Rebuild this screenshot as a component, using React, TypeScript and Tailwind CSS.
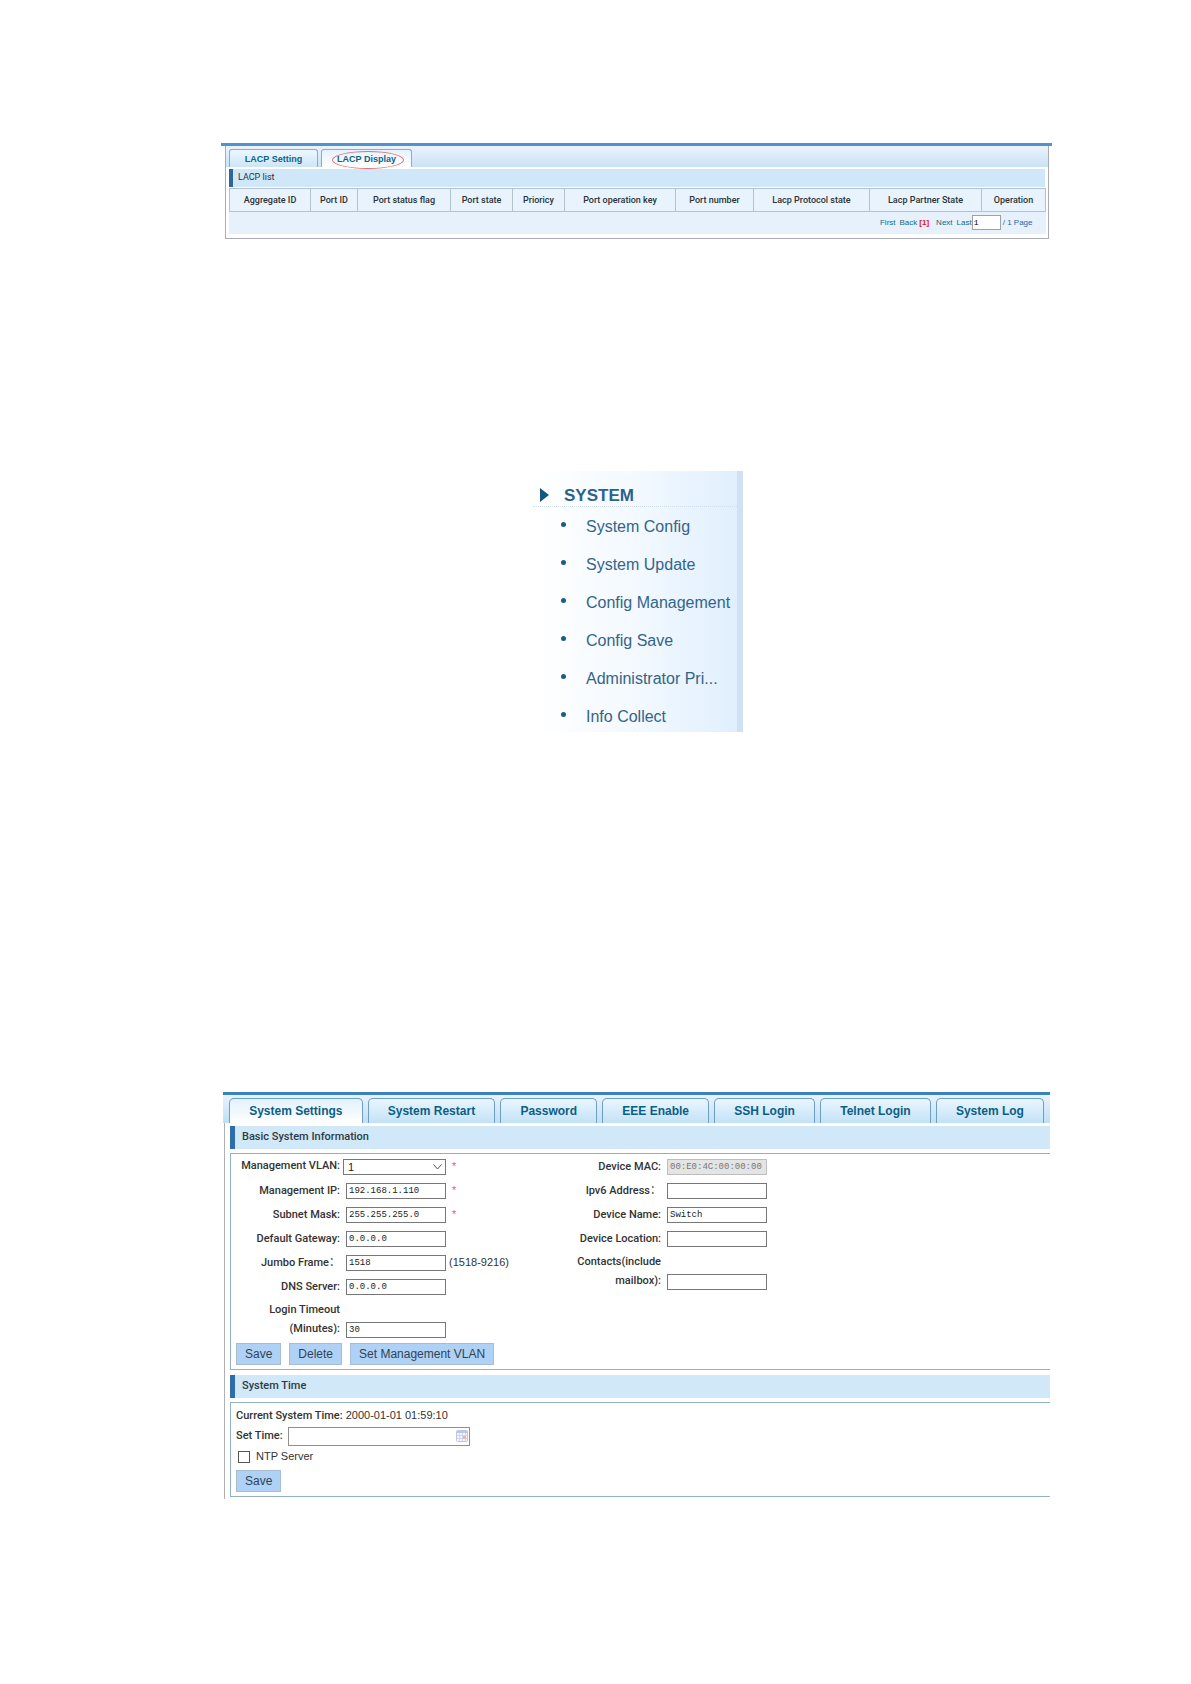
import { ReactNode } from "react";

const columns: [string, string][] = [
  ["Aggregate ID", "w-[81px]"],
  ["Port ID", "w-[47px]"],
  ["Port status flag", "w-[93px]"],
  ["Port state", "w-[62px]"],
  ["Prioricy", "w-[52px]"],
  ["Port operation key", "w-[111px]"],
  ["Port number", "w-[78px]"],
  ["Lacp Protocol state", "w-[116px]"],
  ["Lacp Partner State", "w-[112px]"],
  ["Operation", "w-[64px]"],
];

const menuItems = [
  "System Config",
  "System Update",
  "Config Management",
  "Config Save",
  "Administrator Pri...",
  "Info Collect",
];

const systemTabs = [
  "System Settings",
  "System Restart",
  "Password",
  "EEE Enable",
  "SSH Login",
  "Telnet Login",
  "System Log",
];

function LacpPanel() {
  return (
    <section className="border-t-3 border-[#4d93cf]">
      <div className="ml-1 mr-[3px] border-x border-b border-[#a9adb3] border-t-0">
        <div
          role="tablist"
          className="flex h-[21px] items-end gap-[3px] bg-linear-to-b from-[#edf2fd] to-[#c8e3f5] pl-[3px]"
        >
          <button
            role="tab"
            aria-selected={false}
            className="h-[18px] w-[89px] rounded-t-[3px] border border-b-0 border-[#86aed0] bg-linear-to-b from-[#eef7fe] to-[#cbe6f8] text-[9px] font-bold leading-4 text-[#0b6489]"
          >
            LACP Setting
          </button>
          <button
            role="tab"
            aria-selected
            className="relative h-[18px] w-[91px] rounded-t-[3px] border border-b-0 border-[#86aed0] bg-linear-to-b from-[#e6f2fc] to-white text-[9px] font-bold leading-4 text-[#0b6489]"
          >
            LACP Display
            <span className="absolute left-[10px] top-px h-[18px] w-[72px] rounded-[50%] border border-[#e0707a]" />
          </button>
        </div>
        <div className="px-[3px] pb-1 pt-[2px]">
          <h2 className="h-[18px] border-l-4 border-[#2f6699] bg-[#cfe7f8] pl-[5px] font-['Roboto',sans-serif] text-[9px] leading-[17px] text-[#26323c]">
            LACP list
          </h2>
          <table className="mt-px w-full table-fixed border-collapse bg-[#e6f1fb] text-[#2b3238]">
            <thead>
              <tr className="h-[23px]">
                {columns.map(([name, width]) => (
                  <th
                    key={name}
                    className={`${width} whitespace-nowrap border border-[#b3c3cd] bg-[#e8f3fd] p-0 font-['Roboto',sans-serif] text-[9px] font-medium leading-3`}
                  >
                    {name}
                  </th>
                ))}
              </tr>
            </thead>
            <tbody>
              <tr className="h-[22px]">
                <td colSpan={10} className="p-0">
                  <div className="flex items-center justify-end pr-[13px] text-[8px] text-[#0d6c86]">
                    <a href="#first">First</a>
                    <a href="#back" className="ml-1">Back</a>
                    <span className="ml-[2px] font-bold text-[#e0122c]">[1]</span>
                    <a href="#next" className="ml-[7px]">Next</a>
                    <a href="#last" className="ml-1">Last</a>
                    <input
                      aria-label="Page number"
                      defaultValue="1"
                      className="h-[15px] w-[29px] border border-[#9aa3aa] bg-white px-px font-['Liberation_Mono',monospace] text-[8px] text-black"
                    />
                    <span className="ml-[2px] text-[#2a68ab]">/ 1 Page</span>
                  </div>
                </td>
              </tr>
            </tbody>
          </table>
        </div>
      </div>
    </section>
  );
}

function SystemMenu() {
  return (
    <nav className="ml-[312px] mt-[232px] w-[210px] border-r-6 border-[#d0e0f5] bg-linear-to-r from-white via-[#f3f9ff] to-[#e0effd] pb-[3px] text-[#33648a]">
      <div className="flex h-9 items-end border-b border-dotted border-[#cfdcea] pl-[7px]">
        <svg viewBox="0 0 9 14" className="mb-1 h-[14px] w-[9px]" aria-hidden="true">
          <path d="M0 0L9 7L0 14Z" fill="#15587f" />
        </svg>
        <span className="ml-[15px] text-[17px] font-bold leading-5 text-[#2a6389]">SYSTEM</span>
      </div>
      <ul className="flex flex-col gap-[14px] pt-2">
        {menuItems.map((item) => (
          <li key={item} className="flex h-6 items-center whitespace-nowrap pl-7">
            <span className="mb-1 size-[5px] rounded-full bg-[#1d5b82]" />
            <a href="#menu" className="ml-5 text-[16px] leading-5">{item}</a>
          </li>
        ))}
      </ul>
    </nav>
  );
}

function SectionTitle({ children }: { children: ReactNode }) {
  return (
    <h2 className="h-[23px] border-l-5 border-[#2f6cab] bg-[#d1e8f8] pl-[7px] font-['Roboto',sans-serif] text-[11px] font-medium leading-[22px] text-[#2f3a43]">
      {children}
    </h2>
  );
}

function Field({
  id,
  label,
  labelWidth,
  value = "",
  required,
  disabled,
  hint,
  wrap,
}: {
  id: string;
  label: string;
  labelWidth: string;
  value?: string;
  required?: boolean;
  disabled?: boolean;
  hint?: string;
  wrap?: boolean;
}) {
  return (
    <div className={wrap ? "-mt-[3px] flex items-end" : "flex h-4 items-center"}>
      <label
        htmlFor={id}
        className={`${labelWidth} ${wrap ? "leading-[19px]" : "whitespace-nowrap leading-4"} text-right font-['Roboto','Noto_Sans_CJK_SC',sans-serif] font-medium`}
      >
        {label}
      </label>
      <input
        id={id}
        defaultValue={value}
        disabled={disabled}
        className="ml-[6px] h-4 w-[100px] border border-[#777] bg-white px-[2px] font-['Liberation_Mono',monospace] text-[9px] text-[#222] disabled:border-[#bdbdbd] disabled:bg-[#e4e4e4] disabled:text-[#777]"
      />
      {required && <span className="ml-[6px] text-[#f0604d]">*</span>}
      {hint && <span className="ml-[3px]">{hint}</span>}
    </div>
  );
}

function ActionButton({ children }: { children: ReactNode }) {
  return (
    <button className="h-[22px] border border-[#a8bccf] bg-[#aed1f5] px-2 text-[12px] leading-5 text-[#2e4357]">
      {children}
    </button>
  );
}

function SystemPanel() {
  return (
    <section className="ml-[2px] mr-[2px] mt-[360px] border-t-3 border-[#3c82c0] text-[11px] text-[#333]">
      <div
        role="tablist"
        className="flex h-[28px] items-end gap-[5px] bg-linear-to-b from-[#e8f3fd] to-[#bfdff5] pl-[6px] pr-[6px]"
      >
        {systemTabs.map((tab, i) => (
          <button
            key={tab}
            role="tab"
            aria-selected={i === 0}
            className={`h-[25px] flex-auto whitespace-nowrap rounded-t-[5px] border border-b-0 border-[#6f9fc4] bg-linear-to-b text-[12px] font-bold leading-6 text-[#0b5f86] ${
              i === 0 ? "from-[#e3f1fc] to-white" : "from-[#eaf6fe] to-[#c3e2f7]"
            }`}
          >
            {tab}
          </button>
        ))}
      </div>
      <div className="ml-px border-l border-[#b0b0b0] pb-[2px] pl-[5px] pt-[3px]">
        <SectionTitle>Basic System Information</SectionTitle>
        <div className="mt-1 border-y border-l border-[#93b1c6] pb-1 pl-[5px] pt-[5px]">
          <div className="flex">
            <div className="flex w-[325px] flex-col gap-2">
              <div className="flex h-4 items-center">
                <label
                  htmlFor="vlan"
                  className="w-[104px] whitespace-nowrap text-right font-['Roboto',sans-serif] font-medium"
                >
                  Management VLAN:
                </label>
                <span className="relative ml-[3px] flex">
                  <select
                    id="vlan"
                    className="h-4 w-[103px] appearance-none border border-[#777] bg-white pl-1 text-[11px] leading-[14px] text-[#222]"
                  >
                    <option>1</option>
                  </select>
                  <svg
                    viewBox="0 0 9 6"
                    className="pointer-events-none absolute right-1 top-[5px] h-[6px] w-[9px]"
                    aria-hidden="true"
                  >
                    <path d="M0.5 0.5L4.5 5L8.5 0.5" fill="none" stroke="#555" />
                  </svg>
                </span>
                <span className="ml-[6px] text-[#f0604d]">*</span>
              </div>
              <Field id="ip" label="Management IP:" labelWidth="w-[104px]" value="192.168.1.110" required />
              <Field id="mask" label="Subnet Mask:" labelWidth="w-[104px]" value="255.255.255.0" required />
              <Field id="gateway" label="Default Gateway:" labelWidth="w-[104px]" value="0.0.0.0" />
              <Field id="jumbo" label="Jumbo Frame：" labelWidth="w-[104px]" value="1518" hint="(1518-9216)" />
              <Field id="dns" label="DNS Server:" labelWidth="w-[104px]" value="0.0.0.0" />
              <Field id="timeout" label="Login Timeout (Minutes):" labelWidth="w-[104px] pl-5" value="30" wrap />
            </div>
            <div className="flex flex-col gap-2">
              <Field id="mac" label="Device MAC:" labelWidth="w-[100px]" value="00:E0:4C:00:00:00" disabled />
              <Field id="ipv6" label="Ipv6 Address：" labelWidth="w-[100px]" />
              <Field id="name" label="Device Name:" labelWidth="w-[100px]" value="Switch" />
              <Field id="location" label="Device Location:" labelWidth="w-[100px]" />
              <Field id="contacts" label="Contacts(include mailbox):" labelWidth="w-[100px]" wrap />
            </div>
          </div>
          <div className="mt-[5px] flex gap-2">
            <ActionButton>Save</ActionButton>
            <ActionButton>Delete</ActionButton>
            <ActionButton>Set Management VLAN</ActionButton>
          </div>
        </div>
        <div className="mt-[5px]">
          <SectionTitle>System Time</SectionTitle>
        </div>
        <div className="mt-1 border-y border-l border-[#93b1c6] pb-1 pl-[5px] pt-[3px]">
          <p className="leading-[18px]">
            <span className="font-['Roboto',sans-serif] font-medium">Current System Time:</span>{" "}
            2000-01-01 01:59:10
          </p>
          <div className="mt-[2px] flex items-center">
            <label htmlFor="set-time" className="font-['Roboto',sans-serif] font-medium">
              Set Time:
            </label>
            <span className="relative ml-[5px] flex">
              <input id="set-time" className="h-[19px] w-[182px] border border-[#8f8f8f] bg-white px-1" />
              <svg
                viewBox="0 0 12 12"
                className="pointer-events-none absolute right-[2px] top-[3px] size-3"
                aria-hidden="true"
              >
                <rect x="0.5" y="0.5" width="11" height="11" rx="1" fill="#f3f6fd" stroke="#bcc6e2" />
                <rect x="1" y="1" width="10" height="2" fill="#b9c8ea" />
                <path d="M1 5.5H11M1 8.5H11M3.5 3V11M6.5 3V11M9.5 3V11" stroke="#cdd6ec" />
                <rect x="7" y="6" width="3" height="3" fill="#f0b3ae" />
              </svg>
            </span>
          </div>
          <label className="mt-1 flex h-[14px] items-center gap-[6px] pl-[2px]">
            <input type="checkbox" className="size-3 appearance-none border border-[#555] bg-white" />
            NTP Server
          </label>
          <div className="mt-[6px] flex">
            <ActionButton>Save</ActionButton>
          </div>
        </div>
      </div>
    </section>
  );
}

export default function App() {
  return (
    <main className="min-h-screen bg-white pb-[180px] pl-[221px] pr-[139px] pt-[143px] font-['Liberation_Sans',Arial,sans-serif]">
      <LacpPanel />
      <SystemMenu />
      <SystemPanel />
    </main>
  );
}
